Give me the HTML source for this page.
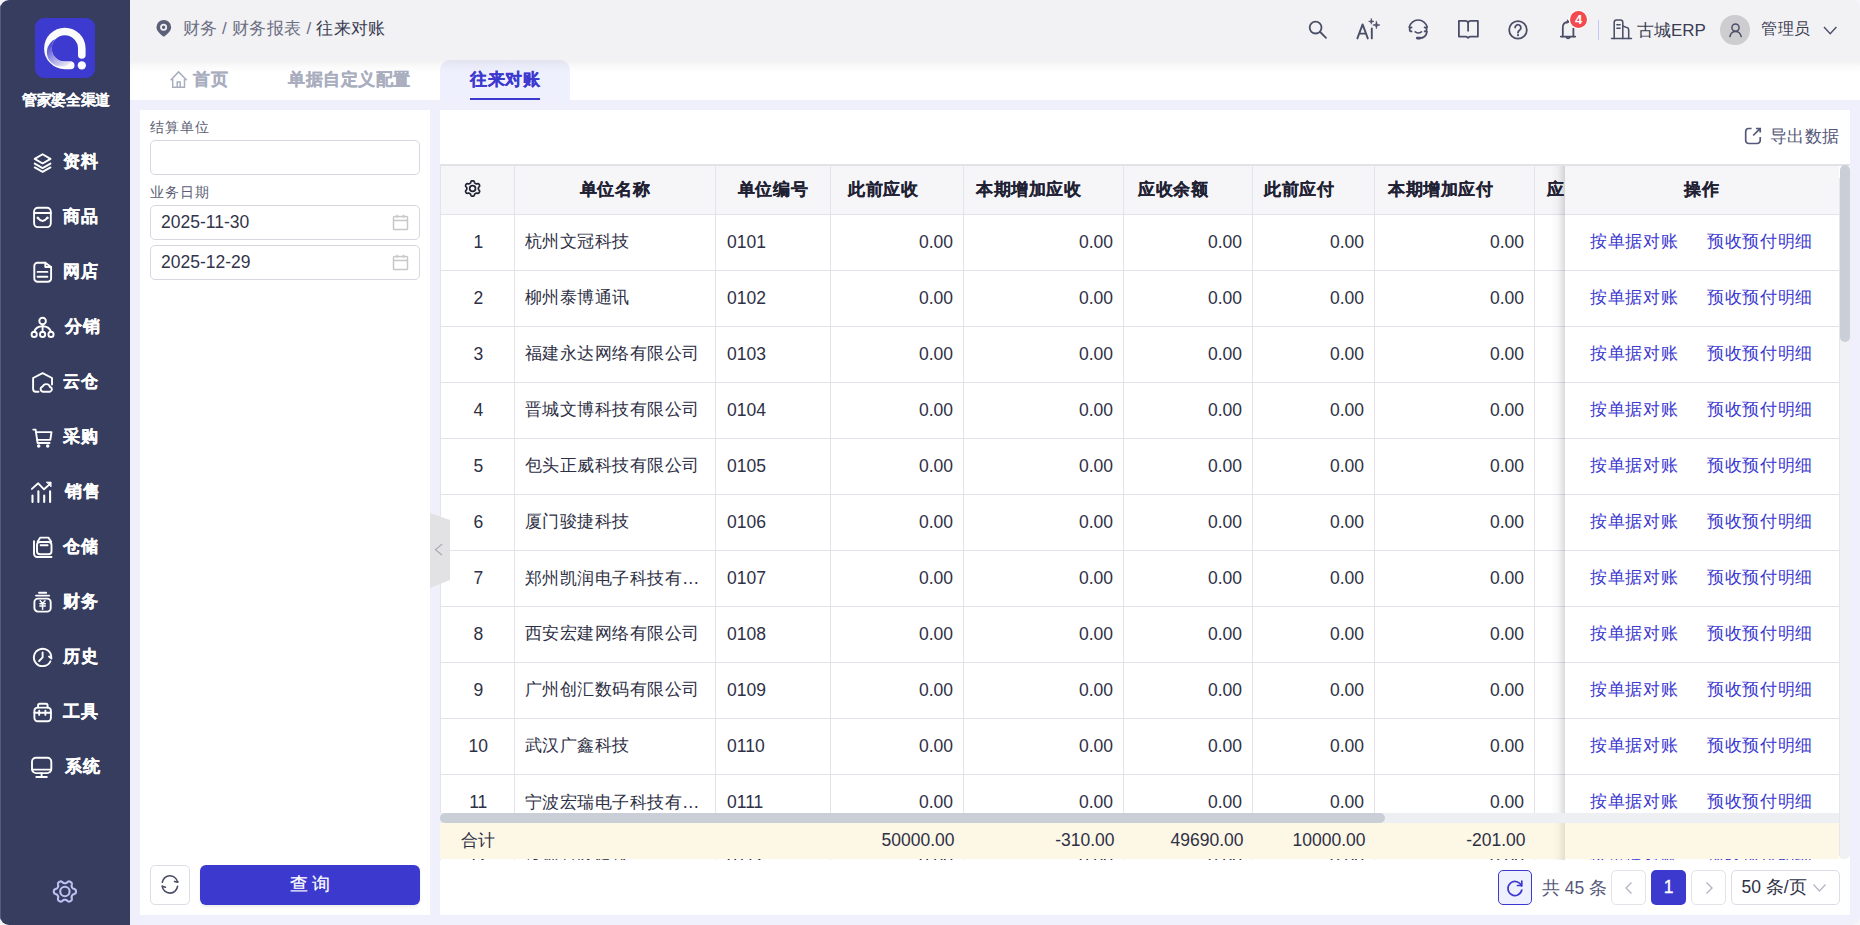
<!DOCTYPE html><html><head><meta charset="utf-8"><style>
*{box-sizing:border-box;margin:0;padding:0}
html,body{width:1860px;height:925px;overflow:hidden;background:#f6f6f8}
body{font-family:"Liberation Sans",sans-serif;color:#2e3045;position:relative}
.abs{position:absolute}
.app{position:absolute;left:0;top:0;width:1860px;height:925px;border-radius:9px;overflow:hidden;background:#eff0fc}
.side{position:absolute;left:0;top:0;width:130px;height:925px;background:#363d5e}
.logo{position:absolute;left:35px;top:18px;width:60px;height:60px;border-radius:9px;background:#3d3ad0;overflow:hidden}
.brand{position:absolute;left:1px;top:89px;width:130px;text-align:center;color:#fff;font-weight:bold;font-size:15px;letter-spacing:-0.4px;line-height:22px;-webkit-text-stroke:0.1px}
.mi{position:absolute;left:0;width:130px;height:40px}
.mi svg{position:absolute;fill:none;stroke:#fff;stroke-width:1.9;stroke-linecap:round;stroke-linejoin:round}
.mi span{position:absolute;left:63px;top:9px;color:#fff;font-weight:bold;font-size:16.5px;letter-spacing:0.5px;line-height:22px;white-space:nowrap;-webkit-text-stroke:0.3px}
.hdr{position:absolute;left:130px;top:0;width:1730px;height:60px;background:#f2f2f5}
.hdrsh{position:absolute;left:130px;top:60px;width:1730px;height:13px;background:linear-gradient(rgba(0,0,20,0.055),rgba(0,0,20,0.02) 50%,rgba(0,0,20,0))}
.tabs{position:absolute;left:130px;top:60px;width:1730px;height:40px;background:#fff}
.crumb{position:absolute;left:182.5px;top:17.5px;font-size:17px;letter-spacing:0.3px;line-height:22px;color:#6b6e82;white-space:nowrap}
.crumb b{font-weight:normal;color:#3a3c52}
.ti{position:absolute;top:0;height:22px}
.ticon svg{fill:none;stroke:#4b4e68;stroke-width:1.6;stroke-linecap:round;stroke-linejoin:round}
.tab{position:absolute;top:67.8px;font-size:16.5px;letter-spacing:0.5px;-webkit-text-stroke:0.25px;font-weight:bold;color:#a9aebf;line-height:22px;white-space:nowrap}
.lp{position:absolute;left:140px;top:110px;width:290px;height:805px;background:#fff}
.rp{position:absolute;left:440px;top:110px;width:1410px;height:805px;background:#fff}
.lbl{position:absolute;left:150px;font-size:14px;letter-spacing:1px;color:#5b5e73;line-height:20px}
.inp{position:absolute;left:150px;width:270px;height:35px;border:1px solid #d6d7e2;border-radius:5px;background:#fff}
.inp span{position:absolute;left:10px;top:5px;font-size:17.5px;line-height:22px;color:#33354a}
.cal{position:absolute;right:10px;top:9px}
.btnr{position:absolute;left:150px;top:865px;width:40px;height:40px;border:1px solid #dcdde6;border-radius:5px;background:#fff}
.btnq{position:absolute;left:200px;top:865px;width:220px;height:40px;border-radius:6px;background:#3c39cf;color:#fff;font-size:17.5px;text-align:center;line-height:38px;-webkit-text-stroke:0.2px;box-shadow:0 2px 3px rgba(0,0,0,0.08)}
table{border-collapse:collapse;table-layout:fixed}
.tbl{position:absolute;left:440px;top:164px;width:1399px;height:697px;overflow:hidden;border-top:1px solid #dfdfe6}
.cell{position:absolute;white-space:nowrap;font-size:17.5px;line-height:22px;color:#2e3045}
.th{font-weight:bold;color:#1f2133}
.cj{font-size:17px;letter-spacing:0.45px}
.cjb{font-size:16.5px;letter-spacing:0.55px;font-weight:bold;-webkit-text-stroke:0.15px}
</style></head><body><div class="app">
<div class="side"><div class="abs" style="left:0;top:0;width:1px;height:925px;background:#565b7a"></div><div class="logo"><svg width="60" height="60" viewBox="0 0 60 60"><defs><linearGradient id="lg" gradientUnits="userSpaceOnUse" x1="17" y1="22" x2="36" y2="47"><stop offset="0" stop-color="#3d3ad0"/><stop offset="0.45" stop-color="#9896e2"/><stop offset="1" stop-color="#f2f2fa"/></linearGradient><clipPath id="cc"><circle cx="26.15" cy="34.28" r="14.27"/></clipPath></defs><path d="M46.8 37 V30.45 A16.95 16.95 0 1 0 29.85 47.4 H35.7" fill="none" stroke="#fbfbfd" stroke-width="7.6" stroke-linecap="round"/><path d="M38 47.4 H29.85 A16.95 16.95 0 0 1 12.9 30.45 A16.95 16.95 0 0 1 20 16.6" fill="none" stroke="url(#lg)" stroke-width="7.8" clip-path="url(#cc)"/><circle cx="46.8" cy="47.4" r="4.15" fill="#fbfbfd"/></svg></div><div class="brand">管家婆全渠道</div><div class="mi" style="top:141px"><svg style="left:28px;top:6px" width="30" height="30" viewBox="0 0 30 30"><path d="M14.6 7.3 L22.5 11.9 L14.6 16.5 L6.7 11.9 Z"/><path d="M6.7 16.6 L14.6 21.1 L22.5 16.6"/><path d="M6.7 20.4 L14.6 24.9 L22.5 20.4"/></svg><span style="left:63px">资料</span></div><div class="mi" style="top:196px"><svg style="left:28px;top:6px" width="30" height="30" viewBox="0 0 30 30"><rect x="6.1" y="5.8" width="16.7" height="19.3" rx="3.8"/><path d="M6.1 11 H22.8"/><path d="M9.8 15.9 Q14.5 22 19.3 15.9"/><circle cx="9.8" cy="15.9" r="0.9" stroke-width="1"/><circle cx="19.3" cy="15.9" r="0.9" stroke-width="1"/></svg><span style="left:63px">商品</span></div><div class="mi" style="top:251px"><svg style="left:28px;top:6px" width="30" height="30" viewBox="0 0 30 30"><path d="M17.3 5.8 H9.6 A3.3 3.3 0 0 0 6.3 9.1 V21.4 A3.3 3.3 0 0 0 9.6 24.7 H19.8 A3.3 3.3 0 0 0 23.1 21.4 V10"/><path d="M17.3 5.8 L23.1 10 H17.3 Z"/><path d="M9.6 14.9 H19.4 M9.6 19.8 H19.4"/></svg><span style="left:63px">网店</span></div><div class="mi" style="top:306px"><svg style="left:28px;top:6px" width="30" height="30" viewBox="0 0 30 30"><circle cx="14.6" cy="9.1" r="3.3"/><circle cx="6.2" cy="22.4" r="2.6"/><circle cx="14.6" cy="22.4" r="2.6"/><circle cx="23" cy="22.4" r="2.6"/><path d="M14.6 12.4 V19.8"/><path d="M6.2 19.8 Q8 14.3 14.6 14.3 Q21.2 14.3 23 19.8"/></svg><span style="left:65px">分销</span></div><div class="mi" style="top:361px"><svg style="left:28px;top:6px" width="30" height="30" viewBox="0 0 30 30"><path d="M24 17.5 V11 L14.6 6.2 L5.1 11 V22 A2.7 2.7 0 0 0 7.8 24.7 H10.5"/><path d="M14.9 24.7 A2.6 2.6 0 0 1 14.6 19.6 A3.9 3.9 0 0 1 22 20 A2.4 2.4 0 0 1 22 24.7 Z"/></svg><span style="left:63px">云仓</span></div><div class="mi" style="top:416px"><svg style="left:28px;top:6px" width="30" height="30" viewBox="0 0 30 30"><path d="M5.3 7.6 H7.6 L9.6 21 H21.6"/><path d="M8.1 10.1 H23.5 L22.3 17.9 H9.3"/><circle cx="10.7" cy="23.9" r="0.8" fill="#fff"/><circle cx="19.7" cy="23.9" r="0.8" fill="#fff"/></svg><span style="left:63px">采购</span></div><div class="mi" style="top:471px"><svg style="left:28px;top:6px" width="30" height="30" viewBox="0 0 30 30"><path d="M4.5 18.6 V24.9 M10.4 14.2 V24.9 M16.2 18.6 V24.9 M22.1 14.4 V24.9" stroke-width="2.1"/><path d="M3.9 11.9 L10.2 6.3 L16 12.3 L21.3 7.6"/><path d="M18.6 5.1 H23.1 V9.6 Z" fill="#fff" stroke-width="0.8"/></svg><span style="left:65px">销售</span></div><div class="mi" style="top:526px"><svg style="left:28px;top:6px" width="30" height="30" viewBox="0 0 30 30"><path d="M6 9.3 V21.8 A3.2 3.2 0 0 0 9.2 25 H23.5"/><rect x="9" y="10" width="14.5" height="12.2" rx="3"/><path d="M9.6 9.7 L12.3 5.6 H20.4 L23.2 9.7"/><path d="M12.6 13.3 H19.6"/></svg><span style="left:63px">仓储</span></div><div class="mi" style="top:581px"><svg style="left:28px;top:6px" width="30" height="30" viewBox="0 0 30 30"><path d="M11 5.8 H18.2"/><path d="M8 8.6 H21.2"/><rect x="6.4" y="11.6" width="16.3" height="13" rx="3.6"/><path d="M12.2 13.8 L14.6 16.6 L17 13.8 M11.9 16.8 H17.3 M11.9 19 H17.3 M14.6 16.6 V22.3" stroke-width="1.5"/></svg><span style="left:63px">财务</span></div><div class="mi" style="top:636px"><svg style="left:28px;top:6px" width="30" height="30" viewBox="0 0 30 30"><path d="M22.4 19.3 A8.7 8.7 0 1 1 23.3 15.6"/><path d="M21 14.6 L23.4 16.4"/><path d="M14.6 10.5 V15.4 L11.1 19"/></svg><span style="left:63px">历史</span></div><div class="mi" style="top:691px"><svg style="left:28px;top:6px" width="30" height="30" viewBox="0 0 30 30"><rect x="6.4" y="10.6" width="16.5" height="13.7" rx="3.2"/><path d="M10.1 10.6 V8.3 A1.6 1.6 0 0 1 11.7 6.7 H18 A1.6 1.6 0 0 1 19.6 8.3 V10.6"/><path d="M6.4 15.8 H22.9 M11.2 13.6 V17.9 M17.4 13.6 V17.9"/></svg><span style="left:63px">工具</span></div><div class="mi" style="top:746px"><svg style="left:28px;top:6px" width="30" height="30" viewBox="0 0 30 30"><rect x="4" y="5.7" width="19.3" height="15.4" rx="4"/><path d="M4.3 17.6 H23 M13.6 21.3 V24.4 M8.3 25 H18.8"/></svg><span style="left:65px">系统</span></div><svg class="abs" style="left:50px;top:876px" width="30" height="30" viewBox="0 0 30 30" fill="none" stroke="#bcc1f3" stroke-width="2.1" stroke-linejoin="round"><path d="M26.00 15.50 L25.99 15.79 L25.97 16.08 L25.92 16.37 L25.85 16.65 L25.74 16.93 L25.58 17.19 L25.36 17.44 L25.07 17.66 L24.69 17.85 L24.27 18.01 L23.84 18.15 L23.46 18.28 L23.15 18.42 L22.91 18.58 L22.72 18.74 L22.57 18.91 L22.43 19.09 L22.31 19.28 L22.20 19.46 L22.09 19.65 L21.98 19.84 L21.88 20.03 L21.78 20.23 L21.69 20.43 L21.62 20.65 L21.57 20.90 L21.56 21.19 L21.59 21.53 L21.67 21.92 L21.76 22.36 L21.83 22.81 L21.86 23.23 L21.81 23.59 L21.71 23.91 L21.56 24.17 L21.37 24.40 L21.16 24.61 L20.94 24.79 L20.70 24.96 L20.45 25.11 L20.19 25.25 L19.93 25.37 L19.66 25.48 L19.38 25.56 L19.08 25.60 L18.78 25.60 L18.45 25.53 L18.11 25.39 L17.76 25.16 L17.41 24.87 L17.08 24.57 L16.77 24.31 L16.50 24.11 L16.24 23.98 L16.01 23.89 L15.78 23.85 L15.55 23.82 L15.34 23.81 L15.12 23.80 L14.90 23.80 L14.68 23.80 L14.46 23.81 L14.25 23.82 L14.02 23.85 L13.79 23.89 L13.56 23.98 L13.30 24.11 L13.03 24.31 L12.72 24.57 L12.39 24.87 L12.04 25.16 L11.69 25.39 L11.35 25.53 L11.02 25.60 L10.72 25.60 L10.42 25.56 L10.14 25.48 L9.87 25.37 L9.61 25.25 L9.35 25.11 L9.10 24.96 L8.86 24.79 L8.64 24.61 L8.43 24.40 L8.24 24.17 L8.09 23.91 L7.99 23.59 L7.94 23.23 L7.97 22.81 L8.04 22.36 L8.13 21.92 L8.21 21.53 L8.24 21.19 L8.23 20.90 L8.18 20.65 L8.11 20.43 L8.02 20.23 L7.92 20.03 L7.82 19.84 L7.71 19.65 L7.60 19.46 L7.49 19.28 L7.37 19.09 L7.23 18.91 L7.08 18.74 L6.89 18.58 L6.65 18.42 L6.34 18.28 L5.96 18.15 L5.53 18.01 L5.11 17.85 L4.73 17.66 L4.44 17.44 L4.22 17.19 L4.06 16.93 L3.95 16.65 L3.88 16.37 L3.83 16.08 L3.81 15.79 L3.80 15.50 L3.81 15.21 L3.83 14.92 L3.88 14.63 L3.95 14.35 L4.06 14.07 L4.22 13.81 L4.44 13.56 L4.73 13.34 L5.11 13.15 L5.53 12.99 L5.96 12.85 L6.34 12.72 L6.65 12.58 L6.89 12.42 L7.08 12.26 L7.23 12.09 L7.37 11.91 L7.49 11.72 L7.60 11.54 L7.71 11.35 L7.82 11.16 L7.92 10.97 L8.02 10.77 L8.11 10.57 L8.18 10.35 L8.23 10.10 L8.24 9.81 L8.21 9.47 L8.13 9.08 L8.04 8.64 L7.97 8.19 L7.94 7.77 L7.99 7.41 L8.09 7.09 L8.24 6.83 L8.43 6.60 L8.64 6.39 L8.86 6.21 L9.10 6.04 L9.35 5.89 L9.61 5.75 L9.87 5.63 L10.14 5.52 L10.42 5.44 L10.72 5.40 L11.02 5.40 L11.35 5.47 L11.69 5.61 L12.04 5.84 L12.39 6.13 L12.72 6.43 L13.03 6.69 L13.30 6.89 L13.56 7.02 L13.79 7.11 L14.02 7.15 L14.25 7.18 L14.46 7.19 L14.68 7.20 L14.90 7.20 L15.12 7.20 L15.34 7.19 L15.55 7.18 L15.78 7.15 L16.01 7.11 L16.24 7.02 L16.50 6.89 L16.77 6.69 L17.08 6.43 L17.41 6.13 L17.76 5.84 L18.11 5.61 L18.45 5.47 L18.78 5.40 L19.08 5.40 L19.38 5.44 L19.66 5.52 L19.93 5.63 L20.19 5.75 L20.45 5.89 L20.70 6.04 L20.94 6.21 L21.16 6.39 L21.37 6.60 L21.56 6.83 L21.71 7.09 L21.81 7.41 L21.86 7.77 L21.83 8.19 L21.76 8.64 L21.67 9.08 L21.59 9.47 L21.56 9.81 L21.57 10.10 L21.62 10.35 L21.69 10.57 L21.78 10.77 L21.88 10.97 L21.98 11.16 L22.09 11.35 L22.20 11.54 L22.31 11.72 L22.43 11.91 L22.57 12.09 L22.72 12.26 L22.91 12.42 L23.15 12.58 L23.46 12.72 L23.84 12.85 L24.27 12.99 L24.69 13.15 L25.07 13.34 L25.36 13.56 L25.58 13.81 L25.74 14.07 L25.85 14.35 L25.92 14.63 L25.97 14.92 L25.99 15.21 Z"/><circle cx="14.9" cy="15.5" r="4.7"/></svg></div><div class="hdr"></div><div class="tabs"></div><svg class="abs" style="left:150px;top:14px" width="30" height="30" viewBox="0 0 30 30"><path d="M13.8 5.9 A7.35 7.35 0 0 1 21.15 13.25 C21.15 17.3 16.5 20.8 13.8 22.8 C11.1 20.8 6.45 17.3 6.45 13.25 A7.35 7.35 0 0 1 13.8 5.9 Z" fill="#5c5f78"/><circle cx="13.6" cy="13.3" r="2.6" fill="none" stroke="#f2f2f5" stroke-width="1.8"/></svg><div class="crumb">财务 / 财务报表 / <b>往来对账</b></div><svg class="abs" style="left:1290px;top:0px" width="350" height="60" viewBox="1290 0 350 60" fill="none" stroke="#4b4e68" stroke-width="1.8" stroke-linecap="round" stroke-linejoin="round"><circle cx="1315.6" cy="27.6" r="5.9"/><path d="M1320.2 32 L1326 37.8"/><path d="M1357.4 38.4 L1362.6 24.4 L1367.8 38.4 M1359.6 33.6 H1365.6 M1371.8 28.4 V38.4" stroke-width="1.9"/><path d="M1371.3 18.6 L1371.9 20.8 L1374 21.4 L1371.9 22 L1371.3 24.2 L1370.7 22 L1368.6 21.4 L1370.7 20.8 Z" fill="#4b4e68" stroke-width="0.6"/><path d="M1376.4 21.3 L1377.2 24.2 L1380 25 L1377.2 25.8 L1376.4 28.7 L1375.6 25.8 L1372.8 25 L1375.6 24.2 Z" fill="#4b4e68" stroke-width="0.6"/><path d="M1409.2 27.3 A9.2 9.2 0 0 1 1427.2 27.3" stroke-width="1.7"/><path d="M1411.6 27.4 A2 2 0 1 0 1411.6 31.4" stroke-width="1.7"/><path d="M1424.6 27.4 A2 2 0 1 1 1424.6 31.4" stroke-width="1.7"/><path d="M1415.3 31.8 Q1418.3 34.2 1421.4 31.8" stroke-width="1.7"/><path d="M1427 31.5 Q1426 38.2 1419.5 38.2" stroke-width="1.7"/><path d="M1417.2 38.1 H1420" stroke-width="2.6"/><path d="M1458.9 20.9 H1465.5 Q1467.3 20.9 1468.1 22.6 Q1468.9 20.9 1470.7 20.9 H1477.9 V36.6 H1470.5 Q1469.3 36.6 1468.1 37.8 Q1466.9 36.6 1465.7 36.6 H1458.9 Z"/><path d="M1468.1 22.6 V30.8"/><circle cx="1518" cy="29.9" r="8.8"/><path d="M1515.1 27.6 A2.9 2.9 0 1 1 1519.8 29.9 Q1518 31 1518 32.7"/><path d="M1518 34.9 V35.3" stroke-width="2"/><path d="M1562.8 36.6 V28 A5.3 5.3 0 0 1 1568 21.8" /><path d="M1573.4 28.6 V36.6"/><path d="M1560.8 36.6 H1575.2"/><path d="M1566.3 37 A1.8 1.8 0 0 0 1569.8 37"/><path d="M1567.4 20.2 L1568.6 21.9 L1566.8 23" stroke-width="1.3"/><g stroke-width="1.55"><path d="M1611.5 38.4 H1631.5"/><path d="M1614.2 38.4 V22.3 A2.3 2.3 0 0 1 1616.5 20 H1620.5 A2.3 2.3 0 0 1 1622.8 22.3 V38.4"/><path d="M1622.8 26 L1627 27.6 A2.4 2.4 0 0 1 1628.7 29.9 V38.4"/><path d="M1616.9 24.7 H1620.1 M1616.9 28.3 H1620.1" stroke-width="1.6"/></g></svg><div class="abs" style="left:1569.8px;top:10.9px;width:17.4px;height:17.4px;border-radius:50%;background:#f24a4f;box-shadow:0 0 0 1.2px #fff;color:#fff;font-size:13px;font-weight:bold;line-height:17.4px;text-align:center">4</div><div class="abs" style="left:1598px;top:20px;width:1px;height:20px;background:#c3c8f6"></div><div class="abs" style="left:1637px;top:19.5px;font-size:17px;line-height:22px;color:#3a3c52;white-space:nowrap">古城ERP</div><div class="abs" style="left:1720.3px;top:15.1px;width:29.6px;height:29.6px;border-radius:50%;background:#cdcdd0"></div><svg class="abs" style="left:1715px;top:10px" width="45" height="40" viewBox="1715 10 45 40" fill="none" stroke="#4b4e68" stroke-width="1.5" stroke-linecap="round"><circle cx="1735.5" cy="27.6" r="3.6"/><path d="M1729.9 36.6 Q1731 31.6 1735.5 31.6 Q1740 31.6 1741.2 36.6"/></svg><div class="abs" style="left:1761px;top:18px;font-size:16px;letter-spacing:0.6px;line-height:22px;color:#3a3c52;white-space:nowrap">管理员</div><svg class="abs" style="left:1822px;top:25px" width="16" height="12" viewBox="0 0 16 12" fill="none" stroke="#4b4e68" stroke-width="1.4"><path d="M2 2 L8.2 8.8 L14.4 2"/></svg><svg class="abs" style="left:164px;top:64px" width="30" height="30" viewBox="0 0 30 30" fill="none" stroke="#a9aebf" stroke-width="1.5" stroke-linejoin="miter"><path d="M6.6 16.3 L14.6 7.9 L22.8 16.3"/><path d="M8.7 15 V23.2 H20.5 V15"/><path d="M13.2 23.2 V18.1 H16.2 V23.2"/></svg><div class="tab" style="left:193px">首页</div><div class="tab" style="left:288px">单据自定义配置</div><div class="abs" style="left:440px;top:60px;width:130px;height:41px;border-radius:10px 10px 0 0;background:#eff0fd"></div><div class="hdrsh"></div><div class="tab" style="left:470px;color:#3c39cf">往来对账</div><div class="abs" style="left:470px;top:98px;width:70px;height:2px;background:#3c39cf"></div><div class="lp"></div><div class="lbl" style="top:117px">结算单位</div><div class="inp" style="top:140px"></div><div class="lbl" style="top:182px">业务日期</div><div class="inp" style="top:205px"><span>2025-11-30</span><svg class="cal" style="top:8px" width="17" height="17" viewBox="0 0 17 17" fill="none" stroke="#c8c8cb" stroke-width="1.5"><rect x="1.5" y="2.5" width="14" height="13" rx="0.8"/><path d="M1.5 6.5 H15.5 M5 0.8 V3.8 M11.5 0.8 V3.8"/></svg></div><div class="inp" style="top:245px"><span>2025-12-29</span><svg class="cal" style="top:8px" width="17" height="17" viewBox="0 0 17 17" fill="none" stroke="#c8c8cb" stroke-width="1.5"><rect x="1.5" y="2.5" width="14" height="13" rx="0.8"/><path d="M1.5 6.5 H15.5 M5 0.8 V3.8 M11.5 0.8 V3.8"/></svg></div><div class="btnr"><svg class="abs" style="left:-1px;top:-1px" width="40" height="40" viewBox="0 0 40 40" fill="none" stroke="#4b4e68" stroke-width="1.6" stroke-linecap="round" stroke-linejoin="round"><path d="M12.3 17.3 A7.7 7.7 0 0 1 27.5 17.1"/><path d="M24.6 16.4 L27.6 17.2 L27.9 16.9"/><path d="M27.6 21.2 A7.7 7.7 0 0 1 12.3 21.3"/><path d="M15.4 22.2 L12.3 21.3"/></svg></div><div class="btnq">查 询</div><div class="rp"></div><svg class="abs" style="left:1735px;top:117px" width="35" height="35" viewBox="0 0 35 35" fill="none" stroke="#55587a" stroke-width="1.7" stroke-linecap="butt" stroke-linejoin="miter"><path d="M16.6 11.5 H13.7 A3 3 0 0 0 10.7 14.5 V23.5 A3 3 0 0 0 13.7 26.5 H22.2 A3 3 0 0 0 25.2 23.5 V20"/><path d="M18.2 18.5 L25 11.7 M21 11.5 H25.2 V15.5"/></svg><div class="abs cj" style="left:1770px;top:126px;line-height:22px;color:#55587a">导出数据</div><div class="abs" style="left:440px;top:164px;width:1399px;height:696px;overflow:hidden"><div class="abs" style="left:0;top:0;width:1399px;height:2px;background:#e2e2e8"></div><div class="abs" style="left:0;top:2px;width:1399px;height:48px;background:#f6f6f9"></div><div class="abs" style="left:0;top:50px;width:1399px;height:1px;background:#e3e3ea"></div><div class="abs" style="left:0;top:106px;width:1399px;height:1px;background:#e3e3ea"></div><div class="abs" style="left:0;top:162px;width:1399px;height:1px;background:#e3e3ea"></div><div class="abs" style="left:0;top:218px;width:1399px;height:1px;background:#e3e3ea"></div><div class="abs" style="left:0;top:274px;width:1399px;height:1px;background:#e3e3ea"></div><div class="abs" style="left:0;top:330px;width:1399px;height:1px;background:#e3e3ea"></div><div class="abs" style="left:0;top:386px;width:1399px;height:1px;background:#e3e3ea"></div><div class="abs" style="left:0;top:442px;width:1399px;height:1px;background:#e3e3ea"></div><div class="abs" style="left:0;top:498px;width:1399px;height:1px;background:#e3e3ea"></div><div class="abs" style="left:0;top:554px;width:1399px;height:1px;background:#e3e3ea"></div><div class="abs" style="left:0;top:610px;width:1399px;height:1px;background:#e3e3ea"></div><div class="abs" style="left:0;top:666px;width:1399px;height:1px;background:#e3e3ea"></div><div class="abs" style="left:0;top:722px;width:1399px;height:1px;background:#e3e3ea"></div><div class="abs" style="left:74.0px;top:1px;width:1px;height:700px;background:#e3e3ea"></div><div class="abs" style="left:275.0px;top:1px;width:1px;height:700px;background:#e3e3ea"></div><div class="abs" style="left:390.0px;top:1px;width:1px;height:700px;background:#e3e3ea"></div><div class="abs" style="left:523.0px;top:1px;width:1px;height:700px;background:#e3e3ea"></div><div class="abs" style="left:683.0px;top:1px;width:1px;height:700px;background:#e3e3ea"></div><div class="abs" style="left:812.0px;top:1px;width:1px;height:700px;background:#e3e3ea"></div><div class="abs" style="left:934.0px;top:1px;width:1px;height:700px;background:#e3e3ea"></div><div class="abs" style="left:1094.0px;top:1px;width:1px;height:700px;background:#e3e3ea"></div><div class="abs" style="left:0;top:1px;width:1px;height:700px;background:#e3e3ea"></div><div class="cell th cjb" style="left:74.5px;top:13.5px;width:201.0px;text-align:center">单位名称</div><div class="cell th cjb" style="left:275.5px;top:13.5px;width:115.0px;text-align:center">单位编号</div><div class="cell th cjb" style="left:408px;top:13.5px;">此前应收</div><div class="cell th cjb" style="left:536px;top:13.5px;">本期增加应收</div><div class="cell th cjb" style="left:698px;top:13.5px;">应收余额</div><div class="cell th cjb" style="left:824px;top:13.5px;">此前应付</div><div class="cell th cjb" style="left:948px;top:13.5px;">本期增加应付</div><div class="cell th cjb" style="left:1107px;top:13.5px;">应收余额</div><svg class="abs" style="left:18px;top:10px" width="30" height="30" viewBox="0 0 30 30" fill="none" stroke="#1f2133" stroke-width="1.7" stroke-linejoin="round"><path d="M20.40 14.50 L20.40 14.65 L20.40 14.80 L20.41 14.96 L20.42 15.11 L20.44 15.27 L20.49 15.43 L20.57 15.61 L20.71 15.80 L20.90 16.01 L21.12 16.25 L21.34 16.50 L21.50 16.74 L21.60 16.98 L21.64 17.20 L21.63 17.41 L21.59 17.61 L21.53 17.80 L21.45 17.99 L21.36 18.17 L21.27 18.35 L21.16 18.52 L21.05 18.69 L20.93 18.85 L20.79 19.00 L20.64 19.13 L20.46 19.24 L20.25 19.32 L19.99 19.36 L19.70 19.34 L19.37 19.27 L19.06 19.20 L18.78 19.14 L18.54 19.12 L18.35 19.13 L18.19 19.17 L18.04 19.23 L17.90 19.30 L17.76 19.37 L17.63 19.45 L17.50 19.52 L17.37 19.60 L17.24 19.68 L17.11 19.76 L16.98 19.84 L16.85 19.94 L16.74 20.07 L16.63 20.23 L16.53 20.44 L16.44 20.71 L16.35 21.02 L16.24 21.33 L16.11 21.60 L15.95 21.80 L15.78 21.94 L15.59 22.04 L15.40 22.11 L15.20 22.15 L15.00 22.18 L14.80 22.20 L14.60 22.20 L14.40 22.20 L14.20 22.18 L14.00 22.15 L13.80 22.11 L13.61 22.04 L13.42 21.94 L13.25 21.80 L13.09 21.60 L12.96 21.33 L12.85 21.02 L12.76 20.71 L12.67 20.44 L12.57 20.23 L12.46 20.07 L12.35 19.94 L12.22 19.84 L12.09 19.76 L11.96 19.68 L11.83 19.60 L11.70 19.52 L11.57 19.45 L11.44 19.37 L11.30 19.30 L11.16 19.23 L11.01 19.17 L10.85 19.13 L10.66 19.12 L10.42 19.14 L10.14 19.20 L9.83 19.27 L9.50 19.34 L9.21 19.36 L8.95 19.32 L8.74 19.24 L8.56 19.13 L8.41 19.00 L8.27 18.85 L8.15 18.69 L8.04 18.52 L7.93 18.35 L7.84 18.17 L7.75 17.99 L7.67 17.80 L7.61 17.61 L7.57 17.41 L7.56 17.20 L7.60 16.98 L7.70 16.74 L7.86 16.50 L8.08 16.25 L8.30 16.01 L8.49 15.80 L8.63 15.61 L8.71 15.43 L8.76 15.27 L8.78 15.11 L8.79 14.96 L8.80 14.80 L8.80 14.65 L8.80 14.50 L8.80 14.35 L8.80 14.20 L8.79 14.04 L8.78 13.89 L8.76 13.73 L8.71 13.57 L8.63 13.39 L8.49 13.20 L8.30 12.99 L8.08 12.75 L7.86 12.50 L7.70 12.26 L7.60 12.02 L7.56 11.80 L7.57 11.59 L7.61 11.39 L7.67 11.20 L7.75 11.01 L7.84 10.83 L7.93 10.65 L8.04 10.48 L8.15 10.31 L8.27 10.15 L8.41 10.00 L8.56 9.87 L8.74 9.76 L8.95 9.68 L9.21 9.64 L9.50 9.66 L9.83 9.73 L10.14 9.80 L10.42 9.86 L10.66 9.88 L10.85 9.87 L11.01 9.83 L11.16 9.77 L11.30 9.70 L11.44 9.63 L11.57 9.55 L11.70 9.48 L11.83 9.40 L11.96 9.32 L12.09 9.24 L12.22 9.16 L12.35 9.06 L12.46 8.93 L12.57 8.77 L12.67 8.56 L12.76 8.29 L12.85 7.98 L12.96 7.67 L13.09 7.40 L13.25 7.20 L13.42 7.06 L13.61 6.96 L13.80 6.89 L14.00 6.85 L14.20 6.82 L14.40 6.80 L14.60 6.80 L14.80 6.80 L15.00 6.82 L15.20 6.85 L15.40 6.89 L15.59 6.96 L15.78 7.06 L15.95 7.20 L16.11 7.40 L16.24 7.67 L16.35 7.98 L16.44 8.29 L16.53 8.56 L16.63 8.77 L16.74 8.93 L16.85 9.06 L16.98 9.16 L17.11 9.24 L17.24 9.32 L17.37 9.40 L17.50 9.48 L17.63 9.55 L17.76 9.63 L17.90 9.70 L18.04 9.77 L18.19 9.83 L18.35 9.87 L18.54 9.88 L18.78 9.86 L19.06 9.80 L19.37 9.73 L19.70 9.66 L19.99 9.64 L20.25 9.68 L20.46 9.76 L20.64 9.87 L20.79 10.00 L20.93 10.15 L21.05 10.31 L21.16 10.48 L21.27 10.65 L21.36 10.83 L21.45 11.01 L21.53 11.20 L21.59 11.39 L21.63 11.59 L21.64 11.80 L21.60 12.02 L21.50 12.26 L21.34 12.50 L21.12 12.75 L20.90 12.99 L20.71 13.20 L20.57 13.39 L20.49 13.57 L20.44 13.73 L20.42 13.89 L20.41 14.04 L20.40 14.20 L20.40 14.35 Z"/><circle cx="14.6" cy="14.5" r="2.9"/></svg><div class="cell" style="left:1px;top:67px;width:74.5px;text-align:center">1</div><div class="cell cj" style="left:85px;top:67px;">杭州文冠科技</div><div class="cell " style="left:287px;top:67px;">0101</div><div class="cell" style="left:390.5px;top:67px;width:122.5px;text-align:right">0.00</div><div class="cell" style="left:523.5px;top:67px;width:149.5px;text-align:right">0.00</div><div class="cell" style="left:683.5px;top:67px;width:118.5px;text-align:right">0.00</div><div class="cell" style="left:812.5px;top:67px;width:111.5px;text-align:right">0.00</div><div class="cell" style="left:934.5px;top:67px;width:149.5px;text-align:right">0.00</div><div class="cell" style="left:1094.5px;top:67px;width:155.0px;text-align:right">0.00</div><div class="cell" style="left:1px;top:123px;width:74.5px;text-align:center">2</div><div class="cell cj" style="left:85px;top:123px;">柳州泰博通讯</div><div class="cell " style="left:287px;top:123px;">0102</div><div class="cell" style="left:390.5px;top:123px;width:122.5px;text-align:right">0.00</div><div class="cell" style="left:523.5px;top:123px;width:149.5px;text-align:right">0.00</div><div class="cell" style="left:683.5px;top:123px;width:118.5px;text-align:right">0.00</div><div class="cell" style="left:812.5px;top:123px;width:111.5px;text-align:right">0.00</div><div class="cell" style="left:934.5px;top:123px;width:149.5px;text-align:right">0.00</div><div class="cell" style="left:1094.5px;top:123px;width:155.0px;text-align:right">0.00</div><div class="cell" style="left:1px;top:179px;width:74.5px;text-align:center">3</div><div class="cell cj" style="left:85px;top:179px;">福建永达网络有限公司</div><div class="cell " style="left:287px;top:179px;">0103</div><div class="cell" style="left:390.5px;top:179px;width:122.5px;text-align:right">0.00</div><div class="cell" style="left:523.5px;top:179px;width:149.5px;text-align:right">0.00</div><div class="cell" style="left:683.5px;top:179px;width:118.5px;text-align:right">0.00</div><div class="cell" style="left:812.5px;top:179px;width:111.5px;text-align:right">0.00</div><div class="cell" style="left:934.5px;top:179px;width:149.5px;text-align:right">0.00</div><div class="cell" style="left:1094.5px;top:179px;width:155.0px;text-align:right">0.00</div><div class="cell" style="left:1px;top:235px;width:74.5px;text-align:center">4</div><div class="cell cj" style="left:85px;top:235px;">晋城文博科技有限公司</div><div class="cell " style="left:287px;top:235px;">0104</div><div class="cell" style="left:390.5px;top:235px;width:122.5px;text-align:right">0.00</div><div class="cell" style="left:523.5px;top:235px;width:149.5px;text-align:right">0.00</div><div class="cell" style="left:683.5px;top:235px;width:118.5px;text-align:right">0.00</div><div class="cell" style="left:812.5px;top:235px;width:111.5px;text-align:right">0.00</div><div class="cell" style="left:934.5px;top:235px;width:149.5px;text-align:right">0.00</div><div class="cell" style="left:1094.5px;top:235px;width:155.0px;text-align:right">0.00</div><div class="cell" style="left:1px;top:291px;width:74.5px;text-align:center">5</div><div class="cell cj" style="left:85px;top:291px;">包头正威科技有限公司</div><div class="cell " style="left:287px;top:291px;">0105</div><div class="cell" style="left:390.5px;top:291px;width:122.5px;text-align:right">0.00</div><div class="cell" style="left:523.5px;top:291px;width:149.5px;text-align:right">0.00</div><div class="cell" style="left:683.5px;top:291px;width:118.5px;text-align:right">0.00</div><div class="cell" style="left:812.5px;top:291px;width:111.5px;text-align:right">0.00</div><div class="cell" style="left:934.5px;top:291px;width:149.5px;text-align:right">0.00</div><div class="cell" style="left:1094.5px;top:291px;width:155.0px;text-align:right">0.00</div><div class="cell" style="left:1px;top:347px;width:74.5px;text-align:center">6</div><div class="cell cj" style="left:85px;top:347px;">厦门骏捷科技</div><div class="cell " style="left:287px;top:347px;">0106</div><div class="cell" style="left:390.5px;top:347px;width:122.5px;text-align:right">0.00</div><div class="cell" style="left:523.5px;top:347px;width:149.5px;text-align:right">0.00</div><div class="cell" style="left:683.5px;top:347px;width:118.5px;text-align:right">0.00</div><div class="cell" style="left:812.5px;top:347px;width:111.5px;text-align:right">0.00</div><div class="cell" style="left:934.5px;top:347px;width:149.5px;text-align:right">0.00</div><div class="cell" style="left:1094.5px;top:347px;width:155.0px;text-align:right">0.00</div><div class="cell" style="left:1px;top:403px;width:74.5px;text-align:center">7</div><div class="cell cj" style="left:85px;top:403px;">郑州凯润电子科技有<span style="font-size:17.5px;letter-spacing:0">…</span></div><div class="cell " style="left:287px;top:403px;">0107</div><div class="cell" style="left:390.5px;top:403px;width:122.5px;text-align:right">0.00</div><div class="cell" style="left:523.5px;top:403px;width:149.5px;text-align:right">0.00</div><div class="cell" style="left:683.5px;top:403px;width:118.5px;text-align:right">0.00</div><div class="cell" style="left:812.5px;top:403px;width:111.5px;text-align:right">0.00</div><div class="cell" style="left:934.5px;top:403px;width:149.5px;text-align:right">0.00</div><div class="cell" style="left:1094.5px;top:403px;width:155.0px;text-align:right">0.00</div><div class="cell" style="left:1px;top:459px;width:74.5px;text-align:center">8</div><div class="cell cj" style="left:85px;top:459px;">西安宏建网络有限公司</div><div class="cell " style="left:287px;top:459px;">0108</div><div class="cell" style="left:390.5px;top:459px;width:122.5px;text-align:right">0.00</div><div class="cell" style="left:523.5px;top:459px;width:149.5px;text-align:right">0.00</div><div class="cell" style="left:683.5px;top:459px;width:118.5px;text-align:right">0.00</div><div class="cell" style="left:812.5px;top:459px;width:111.5px;text-align:right">0.00</div><div class="cell" style="left:934.5px;top:459px;width:149.5px;text-align:right">0.00</div><div class="cell" style="left:1094.5px;top:459px;width:155.0px;text-align:right">0.00</div><div class="cell" style="left:1px;top:515px;width:74.5px;text-align:center">9</div><div class="cell cj" style="left:85px;top:515px;">广州创汇数码有限公司</div><div class="cell " style="left:287px;top:515px;">0109</div><div class="cell" style="left:390.5px;top:515px;width:122.5px;text-align:right">0.00</div><div class="cell" style="left:523.5px;top:515px;width:149.5px;text-align:right">0.00</div><div class="cell" style="left:683.5px;top:515px;width:118.5px;text-align:right">0.00</div><div class="cell" style="left:812.5px;top:515px;width:111.5px;text-align:right">0.00</div><div class="cell" style="left:934.5px;top:515px;width:149.5px;text-align:right">0.00</div><div class="cell" style="left:1094.5px;top:515px;width:155.0px;text-align:right">0.00</div><div class="cell" style="left:1px;top:571px;width:74.5px;text-align:center">10</div><div class="cell cj" style="left:85px;top:571px;">武汉广鑫科技</div><div class="cell " style="left:287px;top:571px;">0110</div><div class="cell" style="left:390.5px;top:571px;width:122.5px;text-align:right">0.00</div><div class="cell" style="left:523.5px;top:571px;width:149.5px;text-align:right">0.00</div><div class="cell" style="left:683.5px;top:571px;width:118.5px;text-align:right">0.00</div><div class="cell" style="left:812.5px;top:571px;width:111.5px;text-align:right">0.00</div><div class="cell" style="left:934.5px;top:571px;width:149.5px;text-align:right">0.00</div><div class="cell" style="left:1094.5px;top:571px;width:155.0px;text-align:right">0.00</div><div class="cell" style="left:1px;top:627px;width:74.5px;text-align:center">11</div><div class="cell cj" style="left:85px;top:627px;">宁波宏瑞电子科技有<span style="font-size:17.5px;letter-spacing:0">…</span></div><div class="cell " style="left:287px;top:627px;">0111</div><div class="cell" style="left:390.5px;top:627px;width:122.5px;text-align:right">0.00</div><div class="cell" style="left:523.5px;top:627px;width:149.5px;text-align:right">0.00</div><div class="cell" style="left:683.5px;top:627px;width:118.5px;text-align:right">0.00</div><div class="cell" style="left:812.5px;top:627px;width:111.5px;text-align:right">0.00</div><div class="cell" style="left:934.5px;top:627px;width:149.5px;text-align:right">0.00</div><div class="cell" style="left:1094.5px;top:627px;width:155.0px;text-align:right">0.00</div><div class="cell" style="left:1px;top:683px;width:74.5px;text-align:center">12</div><div class="cell cj" style="left:85px;top:683px;">深圳智联科技</div><div class="cell " style="left:287px;top:683px;">0112</div><div class="cell" style="left:390.5px;top:683px;width:122.5px;text-align:right">0.00</div><div class="cell" style="left:523.5px;top:683px;width:149.5px;text-align:right">0.00</div><div class="cell" style="left:683.5px;top:683px;width:118.5px;text-align:right">0.00</div><div class="cell" style="left:812.5px;top:683px;width:111.5px;text-align:right">0.00</div><div class="cell" style="left:934.5px;top:683px;width:149.5px;text-align:right">0.00</div><div class="cell" style="left:1094.5px;top:683px;width:155.0px;text-align:right">0.00</div><div class="abs" style="left:1111px;top:2px;width:14px;height:700px;background:linear-gradient(90deg,rgba(0,0,0,0),rgba(0,0,0,0.03) 50%,rgba(0,0,0,0.14))"></div><div class="abs" style="left:1125px;top:0;width:274px;height:697px;background:#fff"><div class="abs" style="left:0;top:0;width:274px;height:2px;background:#e2e2e8"></div><div class="abs" style="left:0;top:2px;width:274px;height:48px;background:#f6f6f9"></div><div class="abs" style="left:0;top:50px;width:274px;height:1px;background:#e3e3ea"></div><div class="abs" style="left:0;top:106px;width:274px;height:1px;background:#e3e3ea"></div><div class="abs" style="left:0;top:162px;width:274px;height:1px;background:#e3e3ea"></div><div class="abs" style="left:0;top:218px;width:274px;height:1px;background:#e3e3ea"></div><div class="abs" style="left:0;top:274px;width:274px;height:1px;background:#e3e3ea"></div><div class="abs" style="left:0;top:330px;width:274px;height:1px;background:#e3e3ea"></div><div class="abs" style="left:0;top:386px;width:274px;height:1px;background:#e3e3ea"></div><div class="abs" style="left:0;top:442px;width:274px;height:1px;background:#e3e3ea"></div><div class="abs" style="left:0;top:498px;width:274px;height:1px;background:#e3e3ea"></div><div class="abs" style="left:0;top:554px;width:274px;height:1px;background:#e3e3ea"></div><div class="abs" style="left:0;top:610px;width:274px;height:1px;background:#e3e3ea"></div><div class="abs" style="left:0;top:666px;width:274px;height:1px;background:#e3e3ea"></div><div class="abs" style="left:0;top:722px;width:274px;height:1px;background:#e3e3ea"></div><div class="cell th cjb" style="left:0;top:13.5px;width:274px;text-align:center">操作</div><div class="cell cj" style="left:25px;top:67px;color:#3c39cf;letter-spacing:0.7px">按单据对账</div><div class="cell cj" style="left:142px;top:67px;color:#3c39cf;letter-spacing:0.7px">预收预付明细</div><div class="cell cj" style="left:25px;top:123px;color:#3c39cf;letter-spacing:0.7px">按单据对账</div><div class="cell cj" style="left:142px;top:123px;color:#3c39cf;letter-spacing:0.7px">预收预付明细</div><div class="cell cj" style="left:25px;top:179px;color:#3c39cf;letter-spacing:0.7px">按单据对账</div><div class="cell cj" style="left:142px;top:179px;color:#3c39cf;letter-spacing:0.7px">预收预付明细</div><div class="cell cj" style="left:25px;top:235px;color:#3c39cf;letter-spacing:0.7px">按单据对账</div><div class="cell cj" style="left:142px;top:235px;color:#3c39cf;letter-spacing:0.7px">预收预付明细</div><div class="cell cj" style="left:25px;top:291px;color:#3c39cf;letter-spacing:0.7px">按单据对账</div><div class="cell cj" style="left:142px;top:291px;color:#3c39cf;letter-spacing:0.7px">预收预付明细</div><div class="cell cj" style="left:25px;top:347px;color:#3c39cf;letter-spacing:0.7px">按单据对账</div><div class="cell cj" style="left:142px;top:347px;color:#3c39cf;letter-spacing:0.7px">预收预付明细</div><div class="cell cj" style="left:25px;top:403px;color:#3c39cf;letter-spacing:0.7px">按单据对账</div><div class="cell cj" style="left:142px;top:403px;color:#3c39cf;letter-spacing:0.7px">预收预付明细</div><div class="cell cj" style="left:25px;top:459px;color:#3c39cf;letter-spacing:0.7px">按单据对账</div><div class="cell cj" style="left:142px;top:459px;color:#3c39cf;letter-spacing:0.7px">预收预付明细</div><div class="cell cj" style="left:25px;top:515px;color:#3c39cf;letter-spacing:0.7px">按单据对账</div><div class="cell cj" style="left:142px;top:515px;color:#3c39cf;letter-spacing:0.7px">预收预付明细</div><div class="cell cj" style="left:25px;top:571px;color:#3c39cf;letter-spacing:0.7px">按单据对账</div><div class="cell cj" style="left:142px;top:571px;color:#3c39cf;letter-spacing:0.7px">预收预付明细</div><div class="cell cj" style="left:25px;top:627px;color:#3c39cf;letter-spacing:0.7px">按单据对账</div><div class="cell cj" style="left:142px;top:627px;color:#3c39cf;letter-spacing:0.7px">预收预付明细</div><div class="cell cj" style="left:25px;top:683px;color:#3c39cf;letter-spacing:0.7px">按单据对账</div><div class="cell cj" style="left:142px;top:683px;color:#3c39cf;letter-spacing:0.7px">预收预付明细</div></div><div class="abs" style="left:0;top:649px;width:1399px;height:10px;background:#eeeff3"></div><div class="abs" style="left:0;top:649px;width:945px;height:10px;border-radius:5px;background:#c9ced7"></div><div class="abs" style="left:0;top:659px;width:1399px;height:36px;background:#fdf7e6"></div><div class="cell cj" style="left:21px;top:665.5px">合计</div><div class="cell" style="left:390.5px;top:665px;width:124.0px;text-align:right">50000.00</div><div class="cell" style="left:523.5px;top:665px;width:151.0px;text-align:right">-310.00</div><div class="cell" style="left:683.5px;top:665px;width:120.0px;text-align:right">49690.00</div><div class="cell" style="left:812.5px;top:665px;width:113.0px;text-align:right">10000.00</div><div class="cell" style="left:934.5px;top:665px;width:151.0px;text-align:right">-201.00</div><div class="abs" style="left:1111px;top:659px;width:14px;height:36px;background:linear-gradient(90deg,rgba(0,0,0,0),rgba(0,0,0,0.02) 50%,rgba(0,0,0,0.10))"></div></div><div class="abs" style="left:1839px;top:165px;width:11px;height:694px;background:#f0f1f4;border-left:1px solid #e6e7ec;border-radius:0 0 5px 5px"></div><div class="abs" style="left:1839px;top:164px;width:11px;height:2px;background:#e2e2e8"></div><div class="abs" style="left:1839px;top:166px;width:11px;height:12px;background:#fff"></div><div class="abs" style="left:1840px;top:165px;width:10px;height:177px;border-radius:5px;background:#c9ced7"></div><svg class="abs" style="left:430px;top:513px" width="21" height="76" viewBox="0 0 21 76"><path d="M0 0 L20 7 V67 L0 75 Z" fill="#e2e2e4"/><path d="M12 31.2 L5.5 36.7 L12 42.2" fill="none" stroke="#a3a3ab" stroke-width="1.1"/></svg><div class="abs" style="left:1498px;top:870px;width:34px;height:35px;border:1px solid #3c39cf;border-radius:5px;background:#eef0fd"><svg class="abs" style="left:6px;top:7px" width="20" height="20" viewBox="0 0 20 20" fill="none" stroke="#3c39cf" stroke-width="1.7" stroke-linecap="round" stroke-linejoin="round"><path d="M16.5 8 A7 7 0 1 0 16.8 12"/><path d="M12.5 7.5 H16.8 V3.2"/></svg></div><div class="abs" style="left:1542px;top:877px;font-size:17.5px;line-height:22px;color:#55587a;white-space:nowrap">共 45 条</div><div class="abs" style="left:1611px;top:870px;width:35px;height:35px;border:1px solid #e3e3ea;border-radius:5px;background:#fff"><svg class="abs" style="left:11px;top:10px" width="12" height="14" viewBox="0 0 12 14" fill="none" stroke="#b5b7c3" stroke-width="1.4"><path d="M8.5 1.5 L3 7 L8.5 12.5"/></svg></div><div class="abs" style="left:1651px;top:870px;width:35px;height:35px;border-radius:5px;background:#3c39cf;color:#fff;font-size:17.5px;line-height:35px;text-align:center;-webkit-text-stroke:0.3px">1</div><div class="abs" style="left:1691px;top:870px;width:35px;height:35px;border:1px solid #e3e3ea;border-radius:5px;background:#fff"><svg class="abs" style="left:11px;top:10px" width="12" height="14" viewBox="0 0 12 14" fill="none" stroke="#b5b7c3" stroke-width="1.4"><path d="M3.5 1.5 L9 7 L3.5 12.5"/></svg></div><div class="abs" style="left:1731px;top:870px;width:109px;height:35px;border:1px solid #dcdde6;border-radius:5px;background:#fff"><div class="cell" style="left:9.5px;top:5px">50 条/页</div><svg class="abs" style="left:80px;top:11px" width="15" height="12" viewBox="0 0 15 12" fill="none" stroke="#b5b7c3" stroke-width="1.3"><path d="M1.5 2.5 L7.5 9 L13.5 2.5"/></svg></div></div></body></html>
